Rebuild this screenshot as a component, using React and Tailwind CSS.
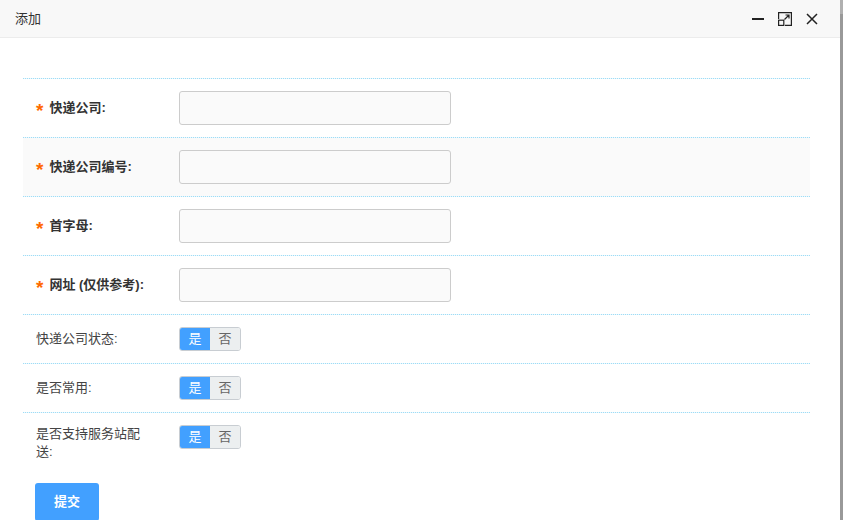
import React, { useState } from 'react';

const fields = [
  { label: '快递公司:', shade: false },
  { label: '快递公司编号:', shade: true },
  { label: '首字母:', shade: false },
  { label: '网址 (仅供参考):', shade: false },
];

const toggles = ['快递公司状态:', '是否常用:', '是否支持服务站配送:'];

function Dots() {
  return <div className="h-px bg-[repeating-linear-gradient(90deg,#9fdcf6_0_1px,#eaf8fd_1px_2px)]" />;
}

function Toggle({ value, onChange }) {
  return (
    <div className="flex h-[24px] w-[62px] overflow-hidden rounded-[3px] border border-[#c8cdd2] text-[13px]">
      <button
        onClick={() => onChange(true)}
        className={`flex-1 leading-[22px] ${value ? 'bg-[#42a0ff] text-white' : 'bg-[#eceff0] text-[#666]'}`}
      >
        是
      </button>
      <button
        onClick={() => onChange(false)}
        className={`flex-1 leading-[22px] ${!value ? 'bg-[#42a0ff] text-white' : 'bg-[#eceff0] text-[#666]'}`}
      >
        否
      </button>
    </div>
  );
}

function App() {
  const [flags, setFlags] = useState([true, true, true]);

  const setFlag = (i, v) => {
    const next = [...flags];
    next[i] = v;
    setFlags(next);
  };

  return (
    <div
      className="flex h-[520px] w-[843px] overflow-hidden bg-white text-[#333]"
      style={{ fontFamily: '"Liberation Sans", "Noto Sans CJK SC", sans-serif' }}
    >
      <div className="flex w-[840px] flex-col">
        {/* Header */}
        <div className="flex h-[38px] shrink-0 items-center justify-between border-b border-[#ececec] bg-[#f8f8f8] pl-[15px] pr-[22px]">
          <span className="text-[13px] text-[#333]">添加</span>
          <div className="flex items-center gap-[14px] text-[#222]">
            <svg width="12" height="14" viewBox="0 0 12 14">
              <rect x="0" y="6" width="12" height="2" fill="currentColor" />
            </svg>
            <svg width="14" height="14" viewBox="0 0 14 14" fill="none" stroke="currentColor" strokeWidth="1.2">
              <path d="M0.6 7 V0.6 H13.4 V13.4 H7" />
              <rect x="0.6" y="8.2" width="5.2" height="5.2" />
              <path d="M6.5 7.5 L11 3 M7.5 3 H11 V6.5" />
            </svg>
            <svg width="12" height="12" viewBox="0 0 12 12" stroke="currentColor" strokeWidth="1.5">
              <path d="M1 1 L11 11 M11 1 L1 11" />
            </svg>
          </div>
        </div>

        {/* Form */}
        <div className="px-[23px] pt-[40px] pr-[30px]">
          {fields.map((f) => (
            <div key={f.label}>
              <Dots />
              <div className={`flex h-[58px] items-center pl-[13px] ${f.shade ? 'bg-[#fafafa]' : ''}`}>
                <div className="flex w-[143px] items-center text-[13px] font-bold text-[#333]">
                  <span className="mr-[6px] mt-[4px] text-[19px] font-bold leading-none text-[#ff6a00]">*</span>
                  {f.label}
                </div>
                <input
                  type="text"
                  className="h-[34px] w-[272px] rounded-[3px] border border-[#cccccc] bg-[#fafafa] px-2 text-[13px] outline-none"
                />
              </div>
            </div>
          ))}
          {toggles.map((t, i) => (
            <div key={t}>
              <Dots />
              <div className={`flex py-[12px] pl-[13px] ${i === 2 ? 'items-start' : 'items-center'}`}>
                <div className="w-[143px]">
                  <div className="w-[112px] text-[13px] leading-[18px] text-[#444]">{t}</div>
                </div>
                <Toggle value={flags[i]} onChange={(v) => setFlag(i, v)} />
              </div>
            </div>
          ))}
          <button className="ml-[12px] mt-[10px] h-[38px] w-[64px] rounded-[3px] bg-[#42a0ff] text-[13px] font-bold text-white">
            提交
          </button>
        </div>
      </div>
      <div className="flex w-[3px] flex-col bg-[#999]">
        <div className="h-[14px] bg-[#b0b0b0]" />
      </div>
    </div>
  );
}

export default App;
